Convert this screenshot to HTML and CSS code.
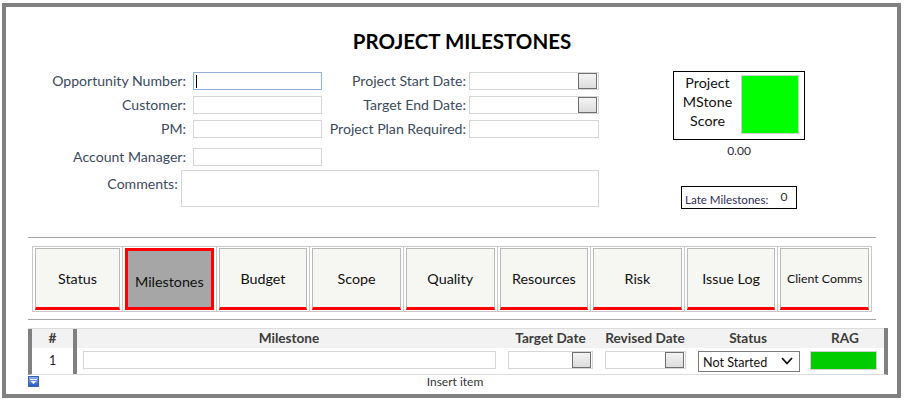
FILE: index.html
```html
<!DOCTYPE html>
<html>
<head>
<meta charset="utf-8">
<title>Project Milestones</title>
<link rel="stylesheet" href="styles.css">
</head>
<body>
<div class="frame">
  <h1 class="title">PROJECT MILESTONES</h1>
  <div class="top">
    <div class="fields">
      <div class="grid">
        <div class="lbl">Opportunity Number:</div>
        <div class="box focus"><span class="caret"></span></div>
        <div class="lbl lbl-mid">Project Start Date:</div>
        <div class="box date"><span class="dbtn"></span></div>

        <div class="lbl">Customer:</div>
        <div class="box"></div>
        <div class="lbl lbl-mid">Target End Date:</div>
        <div class="box date"><span class="dbtn"></span></div>

        <div class="lbl">PM:</div>
        <div class="box"></div>
        <div class="lbl lbl-mid">Project Plan Required:</div>
        <div class="box"></div>

        <div class="lbl last">Account Manager:</div>
        <div class="box last"></div>
      </div>
      <div class="comments">
        <div class="lbl lbl-com">Comments:</div>
        <div class="box area"></div>
      </div>
    </div>
    <div class="score">
      <div class="score-box">
        <div class="score-text">Project<br>MStone<br>Score</div>
        <div class="score-swatch"></div>
      </div>
      <div class="score-val">0.00</div>
      <div class="late"><span class="late-lbl">Late Milestones:</span><span class="late-n">0</span></div>
    </div>
  </div>

  <div class="rule"></div>

  <div class="tabs">
    <div class="cell first"><div class="tab">Status</div></div>
    <div class="cell"><div class="tab active">Milestones</div></div>
    <div class="cell"><div class="tab">Budget</div></div>
    <div class="cell"><div class="tab">Scope</div></div>
    <div class="cell"><div class="tab">Quality</div></div>
    <div class="cell"><div class="tab">Resources</div></div>
    <div class="cell"><div class="tab">Risk</div></div>
    <div class="cell"><div class="tab">Issue Log</div></div>
    <div class="cell"><div class="tab small">Client Comms</div></div>
  </div>

  <div class="rule rule2"></div>

  <div class="tbl">
    <div class="th num">#</div>
    <div class="th">Milestone</div>
    <div class="th">Target Date</div>
    <div class="th">Revised Date</div>
    <div class="th">Status</div>
    <div class="th">RAG</div>

    <div class="td num">1</div>
    <div class="td"><div class="box ms"></div></div>
    <div class="td"><div class="box date td-date1"><span class="dbtn"></span></div></div>
    <div class="td"><div class="box date td-date2"><span class="dbtn"></span></div></div>
    <div class="td"><div class="select"><span>Not Started</span>
      <svg class="chev" width="12" height="8" viewBox="0 0 12 8"><polyline points="1,1 6,6.5 11,1" fill="none" stroke="#111" stroke-width="1.8"/></svg></div></div>
    <div class="td"><div class="rag"></div></div>
  </div>

  <div class="foot">
    <svg class="ins-icon" width="11" height="11" viewBox="0 0 11 11">
      <defs><linearGradient id="g" x1="0" y1="0" x2="0" y2="1"><stop offset="0" stop-color="#8db4f0"/><stop offset="1" stop-color="#2457c4"/></linearGradient></defs>
      <rect x="0.5" y="0.5" width="10" height="10" fill="url(#g)" stroke="#3a62b0"/>
      <rect x="2" y="3" width="7" height="1" fill="#fff"/>
      <polygon points="2.5,5 8.5,5 5.5,8" fill="#fff"/>
    </svg>
    <span class="ins-text">Insert item</span>
  </div>
</div>
</body>
</html>
```

FILE: styles.css
```css
* { box-sizing: border-box; }
html, body { margin: 0; padding: 0; background: #fff; }
body { font-family: Lato, "Liberation Sans", sans-serif; color: #222; }

.frame {
  margin: 3px 0 0 2px;
  width: 899px;
  height: 395px;
  border: 4px solid #808080;
  background: #fff;
}

.title {
  margin: 22px 0 0 0;
  padding-left: 21px;
  text-align: center;
  font-size: 20.5px;
  line-height: 24px;
  font-weight: 700;
  color: #000;
}

.top { display: flex; margin-top: 18px; }

.fields { width: 593px; padding-top: 1px; }

.grid {
  display: grid;
  grid-template-columns: 187px 129px 147px 130px;
  grid-template-rows: 18px 18px 18px 22px;
  row-gap: 6px;
  align-items: center;
}

.lbl {
  text-align: right;
  padding-right: 7px;
  font-size: 14.1px;
  line-height: 18px;
  color: #3b4a5e;
  white-space: nowrap;
}
.lbl-mid { padding-right: 3px; }
.last { align-self: end; }

.box {
  height: 18px;
  border: 1px solid #d6d6d6;
  background: #fff;
  position: relative;
}
.focus { border-color: #8fb0d8; }
.caret {
  position: absolute;
  left: 2px; top: 2px;
  width: 1px; height: 13px;
  background: #000;
}
.date { display: flex; justify-content: flex-end; align-items: center; padding-right: 1px; }
.dbtn {
  width: 19px; height: 16px;
  border: 1px solid #6f6f6f;
  background: linear-gradient(#f4f4f4, #dcdcdc);
}

.comments { display: flex; margin-top: 4px; }
.lbl-com { width: 175px; padding-right: 3px; padding-top: 5px; }
.area { width: 419px; height: 37px; }

.score { margin-left: 74px; width: 140px; }
.score-box {
  width: 132px; height: 69px;
  border: 1px solid #000;
  display: flex;
  padding: 3px 4px 0 0;
}
.score-text {
  width: 67px;
  text-align: center;
  font-size: 14.3px;
  line-height: 19px;
  color: #111;
  margin-top: -2px;
}
.score-swatch {
  width: 58px; height: 59px;
  background: #00ff00;
  border: 1px solid #d0d0d0;
}
.score-val {
  width: 132px;
  text-align: center;
  font-size: 12px;
  line-height: 16px;
  margin-top: 3px;
  color: #1e2a3a;
}
.late {
  margin: 27px 0 0 8px;
  width: 116px; height: 23px;
  border: 1px solid #000;
  display: flex;
  align-items: center;
  padding-left: 3px;
  font-size: 11.6px;
  color: #2d2b5e;
}
.late-lbl { padding-top: 4px; }
.late-n { margin-left: 12px; padding-bottom: 2px; font-size: 12px; color: #1e2a3a; }

.rule {
  margin: 28px 0 0 22px;
  width: 848px;
  height: 1px;
  background: #a6a6a6;
}
.rule2 { margin-top: 7px; }

.tabs {
  margin: 8px 0 0 26px;
  width: 840px;
  height: 66px;
  border: 1px solid #c8c8c8;
  display: flex;
}
.cell {
  flex: 1 1 0;
  padding: 1px 2px;
  border-right: 1px solid #c8c8c8;
}
.cell.first { flex: 0 0 90px; }
.cell:last-child { border-right: none; }
.tab {
  height: 100%;
  border: 1px solid #b8b8b8;
  border-bottom: 3px solid #ff0000;
  background: #f6f6f2;
  display: flex;
  align-items: center;
  justify-content: center;
  font-size: 14.3px;
  color: #111;
  padding-top: 1px;
}
.tab.active {
  background: #a6a6a6;
  border: 3px solid #ff0000;
  padding-top: 5px;
}
.tab.small { font-size: 12.3px; padding-top: 0; }

.tbl {
  margin: 8px 0 0 22px;
  width: 860px;
  display: grid;
  grid-template-columns: 45px 424px 99px 90px 116px 78px;
  grid-template-rows: 20px 26px;
  border-left: 4px solid #808080;
  border-right: 4px solid #808080;
  border-bottom: 1px solid #dcdcdc;
  position: relative;
}
.tbl::before {
  content: "";
  position: absolute;
  left: -4px; right: 0; top: 0;
  height: 1px;
  background: #dcdcdc;
}
.th {
  background: #f2f2f2;
  text-align: center;
  font-weight: 700;
  font-size: 13.6px;
  line-height: 20px;
  color: #3c3c3c;
}
.num { border-right: 4px solid #808080; }
.td.num {
  text-align: center;
  font-size: 12.5px;
  line-height: 20px;
  color: #222;
}
.td { padding-top: 3px; }
.ms { width: 413px; margin-left: 6px; }
.td-date1 { width: 85px; margin-left: 7px; }
.td-date2 { width: 81px; margin-left: 5px; }
.select {
  margin-left: 8px;
  width: 102px; height: 21px;
  border: 1px solid #7a7a7a;
  display: flex;
  align-items: center;
  justify-content: space-between;
  padding: 1px 6px 0 4px;
  font-size: 12.6px;
  color: #111;
}
.chev { margin-top: -2px; }
.rag {
  margin-left: 4px;
  width: 67px; height: 19px;
  background: #00cc00;
  border: 1px solid #d0d0d0;
}

.foot {
  margin: 1px 0 0 22px;
  width: 860px;
  height: 12px;
  position: relative;
  text-align: center;
  font-size: 12px;
  line-height: 12px;
}
.ins-icon { position: absolute; left: 0; top: 0; }
.ins-text {
  color: #333;
  margin-left: -6px;
}
```
